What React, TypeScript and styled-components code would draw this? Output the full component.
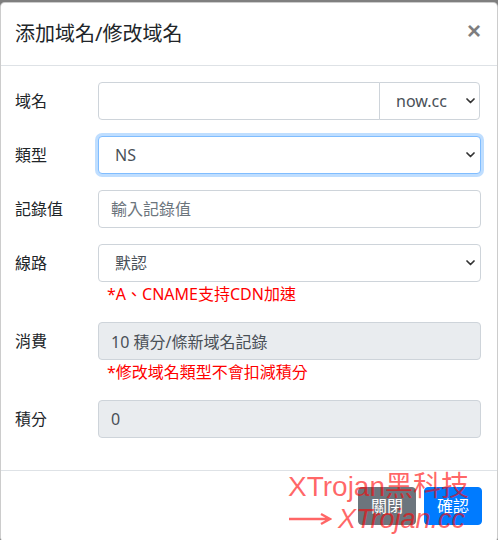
import styled, { createGlobalStyle } from "styled-components";

const GlobalStyle = createGlobalStyle`
  html, body {
    margin: 0;
    padding: 0;
    background-color: #7f7f7f;
    font-family: "Noto Sans", "Noto Sans CJK TC", sans-serif;
    overflow: hidden;
  }
  * {
    box-sizing: border-box;
  }
`;

function Chevron() {
  return (
    <StChevron width="9" height="6" viewBox="0 0 9 6">
      <path
        d="M1 1 L4.5 4.5 L8 1"
        fill="none"
        stroke="#333"
        strokeWidth="1.7"
        strokeLinecap="round"
        strokeLinejoin="round"
      />
    </StChevron>
  );
}

function App() {
  return (
    <>
      <GlobalStyle />
      <StModal>
        <StHeader>
          <StTitle>添加域名/修改域名</StTitle>
          <StClose type="button">×</StClose>
        </StHeader>
        <StBody>
          <StFormRow>
            <StLabel>域名</StLabel>
            <StInputGroup>
              <StInput grouped />
              <StSelectWrap width="101px">
                <StSelect joined defaultValue="now.cc">
                  <option>now.cc</option>
                </StSelect>
                <Chevron />
              </StSelectWrap>
            </StInputGroup>
          </StFormRow>

          <StFormRow>
            <StLabel>類型</StLabel>
            <StSelectWrap>
              <StSelect focused defaultValue="NS">
                <option>NS</option>
              </StSelect>
              <Chevron />
            </StSelectWrap>
          </StFormRow>

          <StFormRow>
            <StLabel>記錄值</StLabel>
            <StInput placeholder="輸入記錄值" />
          </StFormRow>

          <StFormRow>
            <StLabel>線路</StLabel>
            <div>
              <StSelectWrap>
                <StSelect defaultValue="默認">
                  <option>默認</option>
                </StSelect>
                <Chevron />
              </StSelectWrap>
              <StHint>*A、CNAME支持CDN加速</StHint>
            </div>
          </StFormRow>

          <StFormRow>
            <StLabel>消費</StLabel>
            <div>
              <StInput disabled value="10 積分/條新域名記錄" readOnly />
              <StHint>*修改域名類型不會扣減積分</StHint>
            </div>
          </StFormRow>

          <StFormRow>
            <StLabel>積分</StLabel>
            <StInput disabled value="0" readOnly />
          </StFormRow>
        </StBody>
        <StFooter>
          <StButton variant="secondary">關閉</StButton>
          <StButton variant="primary">確認</StButton>
          <StWatermark>
            <StMarkLine>XTrojan黑科技</StMarkLine>
            <StMarkLine>
              <StArrow width="44" height="14" viewBox="0 0 44 14">
                <path
                  d="M1 7 H41 M33 2 L42 7 L33 12"
                  fill="none"
                  stroke="currentColor"
                  strokeWidth="2.4"
                />
              </StArrow>
              <StItalic>XTrojan.cc</StItalic>
            </StMarkLine>
          </StWatermark>
        </StFooter>
      </StModal>
    </>
  );
}

export default App;

const StModal = styled.div`
  width: 498px;
  margin-top: 2px;
  background-color: #ffffff;
  border: 1px solid rgba(0, 0, 0, 0.2);
  border-radius: 0.3rem;
  display: flex;
  flex-direction: column;
`;

const StHeader = styled.div`
  display: flex;
  align-items: flex-start;
  justify-content: space-between;
  padding: 16px 16px 16px 14px;
  border-bottom: 1px solid #dee2e6;
`;

const StTitle = styled.h5`
  margin: 0;
  font-size: 20px;
  font-weight: 400;
  line-height: 1.5;
  color: #212529;
`;

const StClose = styled.button`
  padding: 16px;
  margin: -16px -16px -16px auto;
  background: transparent;
  border: 0;
  font-family: "Liberation Sans", sans-serif;
  font-size: 24px;
  font-weight: 700;
  line-height: 1;
  color: #000000;
  opacity: 0.5;
  cursor: pointer;
`;

const StBody = styled.div`
  padding: 16px 16px 16px 14px;
`;

const StFormRow = styled.div`
  display: grid;
  grid-template-columns: 83px 1fr;
  align-items: start;
  margin-bottom: 16px;
`;

const StLabel = styled.label`
  padding-top: 7px;
  font-size: 16px;
  line-height: 1.5;
  color: #212529;
`;

const StInputGroup = styled.div`
  display: flex;
  align-items: stretch;
  width: 100%;
`;

const StInput = styled.input<{ grouped?: boolean }>`
  display: block;
  flex: 1;
  min-width: 0;
  width: 100%;
  height: 38px;
  padding: 6px 12px;
  font-family: inherit;
  font-size: 16px;
  line-height: 1.5;
  color: #495057;
  background-color: #ffffff;
  border: 1px solid #ced4da;
  border-radius: ${(props) => (props.grouped ? "4px 0 0 4px" : "4px")};
  outline: none;

  &::placeholder {
    color: #6c757d;
  }

  &:disabled {
    background-color: #e9ecef;
    opacity: 1;
  }
`;

const StSelectWrap = styled.div<{ width?: string }>`
  position: relative;
  width: ${(props) => props.width || "100%"};
  flex: none;
`;

const StSelect = styled.select<{ focused?: boolean; joined?: boolean }>`
  display: block;
  width: 100%;
  height: 38px;
  padding: 6px 24px 6px 16px;
  font-family: inherit;
  font-size: 16px;
  line-height: 1.5;
  color: #495057;
  background-color: #ffffff;
  appearance: none;
  outline: none;
  border: 1px solid ${(props) => (props.focused ? "#80bdff" : "#ced4da")};
  border-radius: ${(props) => (props.joined ? "0 4px 4px 0" : "4px")};
  margin-left: ${(props) => (props.joined ? "-1px" : "0")};
  box-shadow: ${(props) =>
    props.focused ? "0 0 0 3px rgba(0, 123, 255, 0.25)" : "none"};
`;

const StChevron = styled.svg`
  position: absolute;
  right: 6px;
  top: 16px;
  pointer-events: none;
`;

const StHint = styled.div`
  padding-left: 9px;
  font-size: 16px;
  line-height: 1.5;
  color: #ff0000;
`;

const StFooter = styled.div`
  position: relative;
  display: flex;
  align-items: center;
  justify-content: flex-end;
  padding: 12px 11px 12px 12px;
  border-top: 1px solid #dee2e6;
`;

const StButton = styled.button<{ variant: "primary" | "secondary" }>`
  margin: 4px;
  padding: 6px 12px;
  font-family: inherit;
  font-size: 16px;
  line-height: 1.5;
  color: #ffffff;
  border: 1px solid
    ${(props) => (props.variant === "primary" ? "#007bff" : "#6c757d")};
  border-radius: 4px;
  background-color: ${(props) =>
    props.variant === "primary" ? "#007bff" : "#6c757d"};
  cursor: pointer;
`;

const StWatermark = styled.div`
  position: absolute;
  left: 287px;
  top: 0;
  color: rgba(255, 0, 0, 0.6);
  pointer-events: none;
`;

const StMarkLine = styled.div`
  display: flex;
  align-items: center;
  gap: 6px;
  font-family: "Liberation Sans", "Noto Sans CJK TC", sans-serif;
  font-size: 28px;
  line-height: 32px;
  white-space: nowrap;
`;

const StArrow = styled.svg`
  flex: none;
`;

const StItalic = styled.span`
  font-style: italic;
  font-size: 27px;
`;
